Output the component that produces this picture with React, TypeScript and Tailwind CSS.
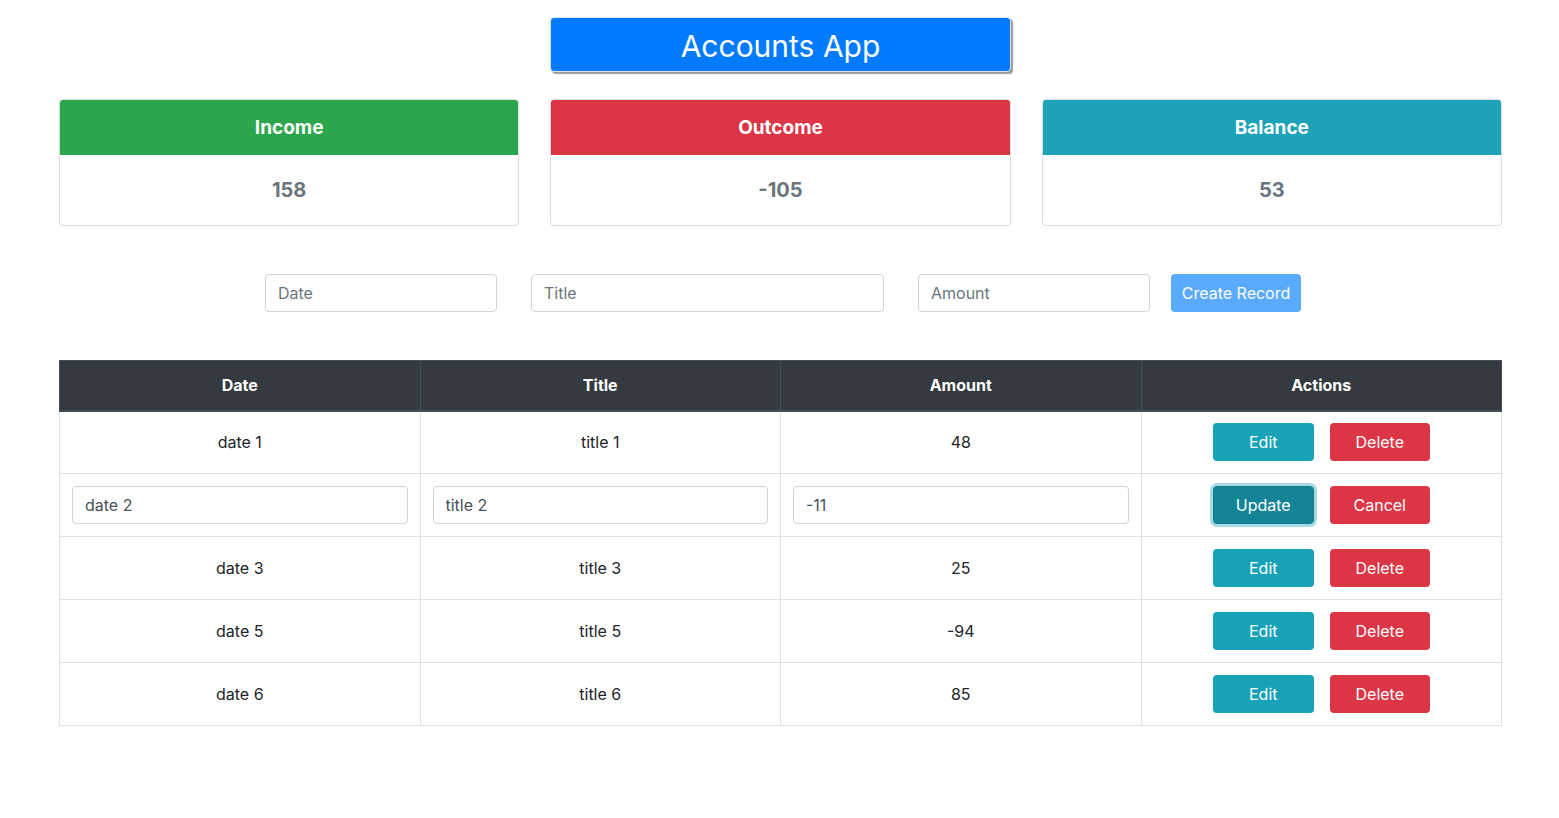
type Row = { date: string; title: string; amount: number; editing?: boolean };

const rows: Row[] = [
  { date: "date 1", title: "title 1", amount: 48 },
  { date: "date 2", title: "title 2", amount: -11, editing: true },
  { date: "date 3", title: "title 3", amount: 25 },
  { date: "date 5", title: "title 5", amount: -94 },
  { date: "date 6", title: "title 6", amount: 85 },
];

const cards = [
  { label: "Income", value: "158", color: "bg-[#2ca64c]" },
  { label: "Outcome", value: "-105", color: "bg-[#dc3545]" },
  { label: "Balance", value: "53", color: "bg-[#1ca3b8]" },
];

const inputCls =
  "h-[38px] rounded-[4px] border border-[#ced4da] bg-white px-3 text-[16px] text-[#495057] placeholder:text-[#6c757d] outline-none";

const App = () => {
  return (
    <div className="min-h-screen bg-white pl-[59px] pr-[57px] font-['Inter',_'Liberation_Sans',_sans-serif] text-[#212529]">
      <div className="grid grid-cols-3 gap-[31px] pt-[17px]">
        <div />
        <div className="flex h-[55px] items-center justify-center rounded-[4px] border border-[#e2e2e2] bg-[#007bff] pt-[3px] text-[30px] text-white shadow-[2px_2px_1px_#9a9a9a]">
          Accounts App
        </div>
      </div>

      <div className="mt-[27px] grid grid-cols-3 gap-[31px]">
        {cards.map((c) => (
          <div key={c.label} className="overflow-hidden rounded-[4px] border border-[#dcdcdc]">
            <div className={`${c.color} flex h-[55px] items-center justify-center pt-[2px] text-[19px] font-bold text-white`}>
              {c.label}
            </div>
            <div className="flex h-[70px] items-center justify-center text-[20px] font-bold text-[#6c757d]">
              {c.value}
            </div>
          </div>
        ))}
      </div>

      <div className="mt-[48px] flex justify-center pl-[5px]">
        <input className={`${inputCls} w-[232px]`} placeholder="Date" />
        <input className={`${inputCls} ml-[34px] w-[353px]`} placeholder="Title" />
        <input className={`${inputCls} ml-[34px] w-[232px]`} placeholder="Amount" />
        <button className="ml-[21px] h-[38px] w-[130px] rounded-[4px] bg-[#5aabff] text-[16px] text-white">
          Create Record
        </button>
      </div>

      <table className="mt-[48px] w-full table-fixed border-collapse text-center text-[16px]">
        <thead>
          <tr className="bg-[#343a40] text-white">
            {["Date", "Title", "Amount", "Actions"].map((h) => (
              <th key={h} className="h-[50px] border border-[#454d55] border-b-2 border-b-[#454d55] font-bold">
                {h}
              </th>
            ))}
          </tr>
        </thead>
        <tbody>
          {rows.map((r) => (
            <tr key={r.date} className="h-[63px]">
              {r.editing ? (
                <>
                  <td className="border border-[#dee2e6] px-3">
                    <input className={`${inputCls} w-full`} defaultValue={r.date} />
                  </td>
                  <td className="border border-[#dee2e6] px-3">
                    <input className={`${inputCls} w-full`} defaultValue={r.title} />
                  </td>
                  <td className="border border-[#dee2e6] px-3">
                    <input className={`${inputCls} w-full`} defaultValue={String(r.amount)} />
                  </td>
                </>
              ) : (
                <>
                  <td className="border border-[#dee2e6]">{r.date}</td>
                  <td className="border border-[#dee2e6]">{r.title}</td>
                  <td className="border border-[#dee2e6]">{r.amount}</td>
                </>
              )}
              <td className="border border-[#dee2e6]">
                <div className="flex items-center justify-center gap-[16px]">
                  {r.editing ? (
                    <>
                      <button className="h-[38px] w-[101px] rounded-[4px] border border-[#117a8b] bg-[#138496] text-white shadow-[0_0_0_3px_rgba(58,176,195,0.45)]">
                        Update
                      </button>
                      <button className="h-[38px] w-[100px] rounded-[4px] bg-[#dc3545] text-white">Cancel</button>
                    </>
                  ) : (
                    <>
                      <button className="h-[38px] w-[101px] rounded-[4px] bg-[#17a2b8] text-white">Edit</button>
                      <button className="h-[38px] w-[100px] rounded-[4px] bg-[#dc3545] text-white">Delete</button>
                    </>
                  )}
                </div>
              </td>
            </tr>
          ))}
        </tbody>
      </table>
    </div>
  );
};

export default App;
